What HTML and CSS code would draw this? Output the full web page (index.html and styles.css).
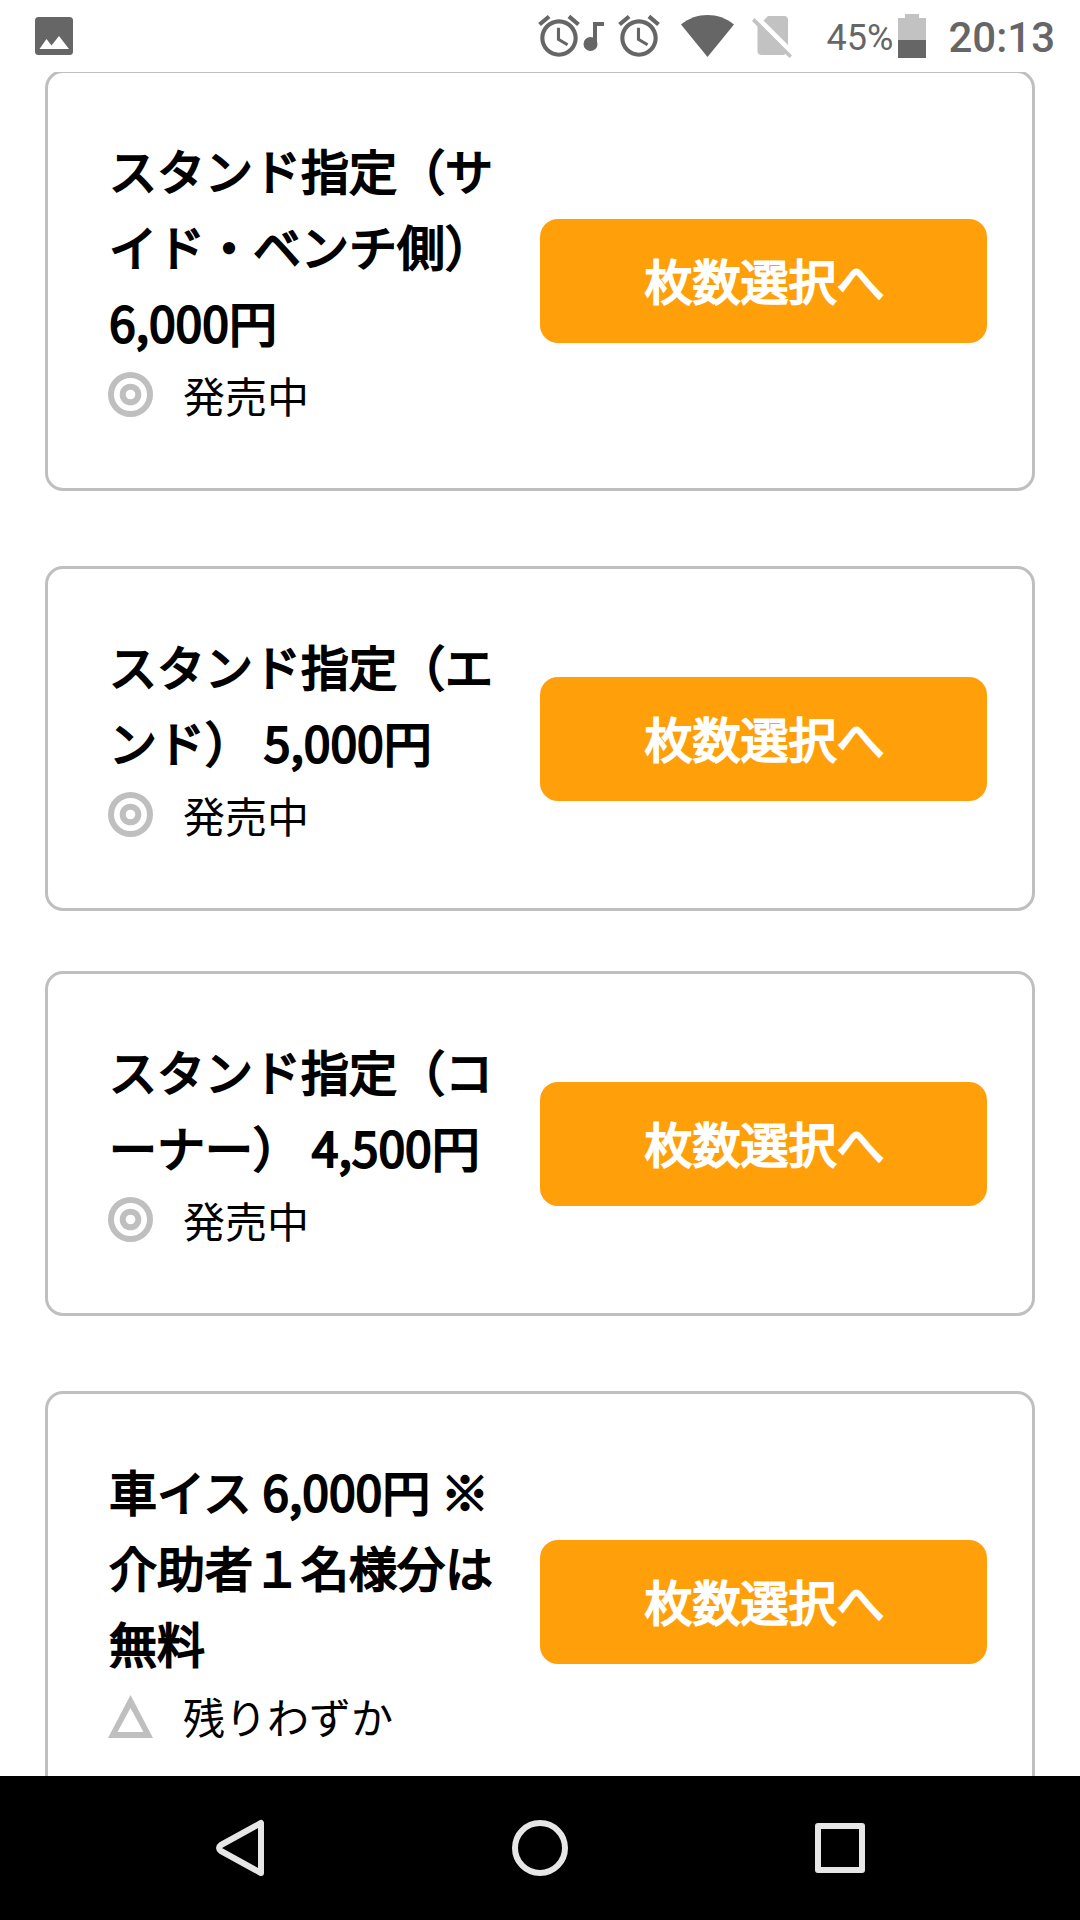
FILE: index.html
```html
<!DOCTYPE html>
<html lang="ja">
<head>
<meta charset="utf-8">
<meta name="viewport" content="width=device-width, initial-scale=1">
<title>席種選択</title>
<link rel="stylesheet" href="styles.css">
</head>
<body>
<svg class="sprite" aria-hidden="true">
  <symbol id="alarm" viewBox="0 0 24 24"><path d="M22 5.72l-4.6-3.86-1.29 1.53 4.6 3.86L22 5.72zM7.88 3.39L6.6 1.86 2 5.71l1.29 1.53 4.59-3.85zM12.5 8H11v6l4.75 2.85.75-1.23-4-2.37V8zM12 4c-4.97 0-9 4.03-9 9s4.02 9 9 9c4.97 0 9-4.03 9-9s-4.03-9-9-9zm0 16c-3.87 0-7-3.13-7-7s3.13-7 7-7 7 3.13 7 7-3.13 7-7 7z"/></symbol>
  <symbol id="on-sale" viewBox="0 0 45 45"><g fill="none" stroke="currentColor" stroke-width="6"><circle cx="22.5" cy="22.5" r="19.5"/><circle cx="22.5" cy="22.5" r="7.8"/></g></symbol>
  <symbol id="few-left" viewBox="0 0 45 45"><path fill="currentColor" fill-rule="evenodd" d="M22.500 2L45 45H0zM22.500 15L9.500 39h26z"/></symbol>
</svg>

<header class="status-bar">
  <svg class="photo-icon" viewBox="0 0 38 38"><rect width="38" height="38" rx="3.500" fill="#666"/><path fill="#fff" d="M4.500 32l7-10 5 6.500L24 19l10 13z"/></svg>
  <div class="status-group">
    <svg class="alarm-music" viewBox="0 0 70 50"><use href="#alarm" width="50" height="50"/><circle cx="56.500" cy="33" r="7"/><path d="M59 11h11v4h-7v18h-4z"/></svg>
    <svg class="alarm" viewBox="0 0 24 24"><use href="#alarm"/></svg>
    <svg class="wifi" viewBox="0 0 53 42"><path d="M26.500 42L0 9.500C8 3 17 0 26.500 0S45 3 53 9.500z"/></svg>
    <svg class="no-sim" viewBox="0 0 40 44"><path d="M16 2h16q4 0 4 4v25L11.500 6.500zM5.500 11L34 39q-1 2-3 2H10q-4.500 0-4.500-4z"/><path d="M0 7l2.500-3L40 41.500 37.500 44z"/></svg>
    <div class="battery">
      <span class="battery-level">45%</span>
      <svg class="battery-icon" viewBox="0 0 28 44"><path class="battery-empty" d="M7 0h14v4h7v22H0V4h7z"/><path d="M0 26h28v18H0z"/></svg>
    </div>
    <time class="clock">20:13</time>
  </div>
</header>

<main class="content">
  <section class="tickets">
    <article class="card">
      <div class="info">
        <h2 class="seat">スタンド指定（サイド・ベンチ側） 6,000円</h2>
        <p class="stock"><svg class="stock-icon"><use href="#on-sale"/></svg>発売中</p>
      </div>
      <button class="select" type="button">枚数選択へ</button>
    </article>
  </section>
  <section class="tickets">
    <article class="card">
      <div class="info">
        <h2 class="seat">スタンド指定（エンド） 5,000円</h2>
        <p class="stock"><svg class="stock-icon"><use href="#on-sale"/></svg>発売中</p>
      </div>
      <button class="select" type="button">枚数選択へ</button>
    </article>
    <article class="card">
      <div class="info">
        <h2 class="seat">スタンド指定（コーナー） 4,500円</h2>
        <p class="stock"><svg class="stock-icon"><use href="#on-sale"/></svg>発売中</p>
      </div>
      <button class="select" type="button">枚数選択へ</button>
    </article>
  </section>
  <section class="tickets">
    <article class="card">
      <div class="info">
        <h2 class="seat">車イス 6,000円 ※介助者１名様分は無料</h2>
        <p class="stock"><svg class="stock-icon"><use href="#few-left"/></svg>残りわずか</p>
      </div>
      <button class="select" type="button">枚数選択へ</button>
    </article>
  </section>
</main>

<nav class="nav-bar" aria-label="システム">
  <button class="nav-button" type="button" aria-label="戻る"><svg class="nav-icon" viewBox="0 0 60 60"><path d="M51 5v50L11 33q-4-3 0-6z"/></svg></button>
  <button class="nav-button" type="button" aria-label="ホーム"><svg class="nav-icon" viewBox="0 0 60 60"><circle cx="30" cy="30" r="25"/></svg></button>
  <button class="nav-button" type="button" aria-label="履歴"><svg class="nav-icon" viewBox="0 0 60 60"><rect x="8" y="8" width="44" height="44"/></svg></button>
</nav>
</body>
</html>
```

FILE: styles.css
```css
* {
  box-sizing: border-box;
}

body {
  margin: 0;
  height: 100vh;
  display: flex;
  flex-direction: column;
  background: #fff;
  color: #000;
  font-family: "Noto Sans CJK JP", sans-serif;
}

svg {
  display: block;
  flex: none;
}

.sprite {
  position: absolute;
  width: 0;
  height: 0;
}

/* Status bar */
.status-bar {
  flex: none;
  height: 72px;
  padding: 0 25px 0 35px;
  display: flex;
  align-items: center;
  justify-content: space-between;
  color: #666;
  fill: #666;
  font-family: Roboto, sans-serif;
}

.photo-icon {
  width: 38px;
  height: 38px;
}

.status-group {
  display: flex;
  align-items: center;
}

.alarm-music {
  width: 70px;
  height: 50px;
  margin-right: 10px;
}

.alarm {
  width: 50px;
  height: 50px;
  margin-right: 17px;
}

.wifi {
  width: 53px;
  height: 42px;
  margin-right: 18px;
}

.no-sim {
  width: 40px;
  height: 44px;
  margin-right: 35px;
  fill: #c2c2c2;
}

.battery {
  display: flex;
  align-items: center;
  gap: 5px;
  margin-right: 22px;
}

.battery-level,
.clock {
  padding-top: 4px;
  line-height: 48px;
}

.battery-level {
  font-size: 36px;
}

.battery-icon {
  width: 28px;
  height: 44px;
}

.battery-empty {
  fill: #c2c2c2;
}

.clock {
  font-size: 42px;
  font-weight: 500;
}

/* Ticket list */
.content {
  flex: 1;
  min-height: 0;
  overflow-y: auto;
  scrollbar-width: none;
  padding: 0 45px;
}

.tickets {
  display: flex;
  flex-direction: column;
  gap: 60px;
  margin-bottom: 75px;
}

.tickets:first-child {
  margin-top: -2px;
}

.card {
  display: grid;
  grid-template-columns: 387fr 447fr;
  align-items: center;
  gap: 45px;
  padding: 60px 45px 60px 60px;
  border: 3px solid #bfbfbf;
  border-radius: 18px;
}

.info {
  margin-top: -2px;
}

/* Regular glyphs thickened with a stroke, as a synthetic bold */
.seat,
.select {
  font-weight: 400;
  font-size: 48px;
  -webkit-text-stroke: 2px currentColor;
}

.seat {
  margin: 0;
  padding-left: 1px;
  line-height: 76px;
  text-spacing-trim: space-all;
}

.stock {
  display: flex;
  align-items: center;
  gap: 30px;
  margin: 0;
  padding-top: 2px;
  font-size: 42px;
  line-height: 67px;
}

.stock-icon {
  width: 45px;
  height: 45px;
  color: #bfbfbf;
}

.select {
  width: 100%;
  height: 124px;
  padding: 0 0 4px 2px;
  border: 0;
  border-radius: 18px;
  background: #ff9f0a;
  color: #fff;
  font-family: inherit;
}

/* Navigation bar */
.nav-bar {
  flex: none;
  height: 144px;
  padding: 0 90px;
  display: flex;
  background: #000;
}

.nav-button {
  flex: 1;
  display: flex;
  align-items: center;
  justify-content: center;
  padding: 0;
  border: 0;
  background: none;
}

.nav-icon {
  width: 60px;
  height: 60px;
  fill: none;
  stroke: #e6e6e6;
  stroke-width: 6;
  stroke-linejoin: round;
}
```
